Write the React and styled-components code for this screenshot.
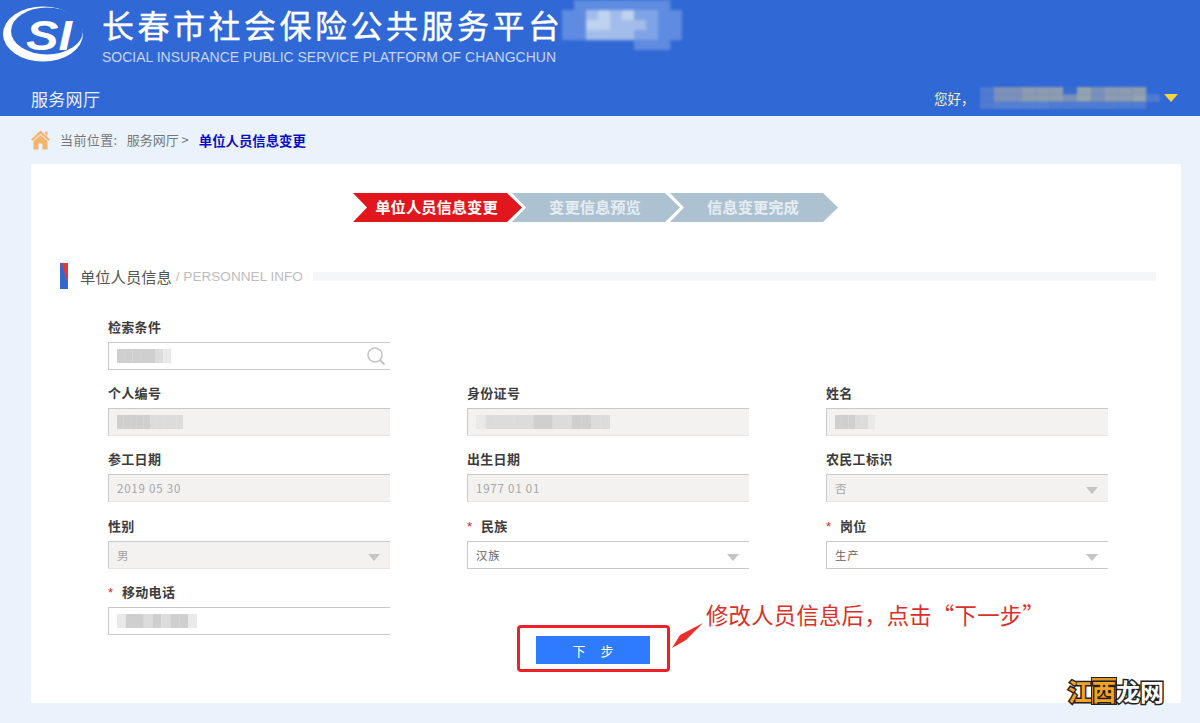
import React from "react";
import styled, { createGlobalStyle } from "styled-components";

const CJK = `"Noto Sans CJK SC", "Liberation Sans", sans-serif`;

const GlobalStyle = createGlobalStyle`
  html, body {
    margin: 0;
    padding: 0;
    background: #eaf3fb;
    font-family: ${CJK};
  }
  * {
    box-sizing: border-box;
  }
`;

// pixelated privacy smudges from the screenshot
const Mosaic = ({ width, height, cols, rows, cells }) => (
  <svg width={width} height={height} viewBox={`0 0 ${cols} ${rows}`} preserveAspectRatio="none" style={{ display: "block", flex: "none" }}>
    {cells.map((row, y) =>
      row.map((c, x) => (c ? <rect key={`${x}-${y}`} x={x} y={y} width={1.02} height={1.02} fill={c} /> : null))
    )}
  </svg>
);

const Logo = () => (
  <svg width="84" height="60" viewBox="0 0 84 60">
    <ellipse cx="42" cy="30" rx="40" ry="27.5" fill="#fff" />
    <ellipse cx="46" cy="27" rx="36" ry="23.5" fill="#3068d6" />
    <text x="25" y="46" fontFamily="Liberation Sans" fontStyle="italic" fontWeight="700" fontSize="42" fill="#fff" textLength="46" lengthAdjust="spacingAndGlyphs">
      SI
    </text>
  </svg>
);

const SearchIcon = () => (
  <svg width="20" height="20" viewBox="0 0 20 20" fill="none" stroke="#c4c4c4">
    <circle cx="9" cy="9" r="7" strokeWidth="1.6" />
    <path d="M14 14l4.5 4.5" strokeWidth="2" />
  </svg>
);

const HomeIcon = () => (
  <svg width="19" height="20" viewBox="0 0 19 20">
    <path d="M9.5 0.5 L19 9.5 L17.4 11 L9.5 3.8 L1.6 11 L0 9.5 Z" fill="#f6b36c" />
    <path d="M9.5 5 L16.5 11.2 V19.5 H11.5 V13.5 H7.5 V19.5 H2.5 V11.2 Z" fill="#f6b36c" />
    <path d="M14 1.5h2.4v4.6L14 4z" fill="#f6b36c" />
  </svg>
);

const h1 = "#5f8ce0";
const h2 = "#7ea3e6";
const h3 = "#a3bdeb";
const h4 = "#c0d2f1";
const headerCells = [
  [null, h1, h1, h1, h1, h1, h1, h1, h1, null],
  [h1, h1, h3, h4, h3, h4, h2, h2, h1, h1],
  [h1, h1, h4, h4, h3, h3, h3, h2, h1, h1],
  [h1, h1, h3, h3, h3, h3, h2, h2, h1, h1],
  [null, null, null, null, null, null, h1, h1, h1, null],
];

const m1 = "#4f7bd0";
const m2 = "#7d90b8";
const m3 = "#8d9cb0";
const m4 = "#93a3ad";
const userCells = [
  [m1, m2, m2, m3, m3, m3, "#3a6bcf", m4, m2, m3, m3, m3, null],
  [m1, m2, m2, m3, m3, m3, m2, m4, m2, m3, m3, m4, m1],
  [m1, "#5580d4", "#5580d4", "#5580d4", "#5580d4", "#4f7bd0", "#4f7bd0", "#4f7bd0", "#4f7bd0", "#4f7bd0", "#4f7bd0", "#4f7bd0", null],
];

const g1 = "#cfcfcf";
const g2 = "#dcdcdc";
const g3 = "#e9e9e9";

const Fields = [
  { label: "检索条件", kind: "search", smudge: [[g1, g1, g1, g1, g1, g2, g3]], sw: 54 },
  null,
  null,
  { label: "个人编号", kind: "locked", smudge: [[g1, g1, g1, g1, g1, g2, g2, g2, g2, g2]], sw: 66 },
  { label: "身份证号", kind: "locked", smudge: [[g3, g2, g2, g2, g2, g2, g1, g1, g2, g2, g1, g1, g2, g2]], sw: 134 },
  { label: "姓名", kind: "locked", smudge: [[g1, g1, g1, g2, g2, g3]], sw: 40 },
  { label: "参工日期", kind: "locked", value: "2019 05 30" },
  { label: "出生日期", kind: "locked", value: "1977 01 01" },
  { label: "农民工标识", kind: "lockedSelect", value: "否" },
  { label: "性别", kind: "lockedSelect", value: "男" },
  { label: "民族", kind: "select", value: "汉族", required: true },
  { label: "岗位", kind: "select", value: "生产", required: true },
  { label: "移动电话", kind: "input", required: true, smudge: [[g3, g1, g1, g2, g1, g2, g1, g1, g3]], sw: 80 },
];

const App = () => {
  return (
    <Page>
      <GlobalStyle />
      <Header>
        <Brand>
          <LogoBox>
            <Logo />
          </LogoBox>
          <BrandText>
            <Title>长春市社会保险公共服务平台</Title>
            <SubTitle>SOCIAL INSURANCE PUBLIC SERVICE PLATFORM OF CHANGCHUN</SubTitle>
          </BrandText>
          <BrandSmudge>
            <Mosaic width={120} height={50} cols={10} rows={5} cells={headerCells} />
          </BrandSmudge>
        </Brand>
        <NavBar>
          <NavTitle>服务网厅</NavTitle>
          <UserBox>
            <Greeting>您好，</Greeting>
            <UserSmudge>
              <Mosaic width={180} height={22} cols={13} rows={3} cells={userCells} />
            </UserSmudge>
            <UserCaret />
          </UserBox>
        </NavBar>
      </Header>

      <Crumbs>
        <HomeIcon />
        <CrumbLead>当前位置:</CrumbLead>
        <CrumbText>服务网厅 &gt;</CrumbText>
        <CrumbCurrent>单位人员信息变更</CrumbCurrent>
      </Crumbs>

      <Card>
        <Steps>
          <Step $active>单位人员信息变更</Step>
          <Step>变更信息预览</Step>
          <Step>信息变更完成</Step>
        </Steps>

        <SectionHead>
          <SectionBar />
          <SectionTitle>单位人员信息</SectionTitle>
          <SectionSub>/ PERSONNEL INFO</SectionSub>
          <SectionStripe />
        </SectionHead>

        <Form>
          {Fields.map((f, i) =>
            f ? (
              <Field key={i}>
                <Label>
                  {f.required && <Star>*</Star>}
                  {f.label}
                </Label>
                <Box $locked={f.kind.startsWith("locked")}>
                  {f.smudge && <Mosaic width={f.sw} height={14} cols={f.smudge[0].length} rows={1} cells={f.smudge} />}
                  {f.value && <Value $locked={f.kind.startsWith("locked")}>{f.value}</Value>}
                  {f.kind === "search" && (
                    <BoxIcon>
                      <SearchIcon />
                    </BoxIcon>
                  )}
                  {f.kind.endsWith("elect") && <SelectCaret />}
                </Box>
              </Field>
            ) : (
              <div key={i} />
            )
          )}
        </Form>

        <Footer>
          <NextButton>下 步</NextButton>
          <Highlight />
          <Arrow width="36" height="28" viewBox="0 0 36 28">
            <path d="M32 1 L15 18 L1 26 L9 13 Z" fill="#e8302c" />
          </Arrow>
          <Note>修改人员信息后，点击“下一步”</Note>
        </Footer>

        <Watermark>
          <WmPlain>江</WmPlain>
          <WmBlock>西</WmBlock>
          <WmWhite>龙网</WmWhite>
        </Watermark>
      </Card>
    </Page>
  );
};

export default App;

const Page = styled.div`
  width: 1200px;
  height: 723px;
  overflow: hidden;
  background: #eaf3fb;
`;

const Header = styled.header`
  height: 116px;
  background: #3068d6;
  display: flex;
  flex-direction: column;
`;

const Brand = styled.div`
  height: 80px;
  display: flex;
  align-items: flex-start;
`;

const LogoBox = styled.div`
  width: 102px;
  padding: 4px 0 0 1px;
`;

const BrandText = styled.div`
  width: 460px;
  padding-top: 4px;
`;

const Title = styled.h1`
  margin: 0;
  font-size: 32px;
  line-height: 40px;
  letter-spacing: 3.5px;
  font-weight: 400;
  -webkit-text-stroke: 0.4px #fff;
  color: #fff;
  white-space: nowrap;
`;

const SubTitle = styled.div`
  margin-top: 5px;
  font-family: "Liberation Sans", sans-serif;
  font-size: 14px;
  line-height: 16px;
  color: #c6d5f2;
  white-space: nowrap;
`;

const BrandSmudge = styled.div`
  filter: blur(1.5px);
`;

const NavBar = styled.div`
  height: 36px;
  display: flex;
  align-items: center;
  justify-content: space-between;
  padding: 0 22px 0 31px;
`;

const NavTitle = styled.div`
  font-size: 17px;
  color: #e8eefb;
  letter-spacing: 0.3px;
`;

const UserBox = styled.div`
  display: flex;
  align-items: center;
`;

const Greeting = styled.span`
  width: 46px;
  font-size: 13.5px;
  color: #f3efb6;
  white-space: nowrap;
`;

const UserSmudge = styled.div`
  filter: blur(1px);
`;

const UserCaret = styled.span`
  margin-left: 4px;
  width: 0;
  height: 0;
  border-left: 7px solid transparent;
  border-right: 7px solid transparent;
  border-top: 8px solid #f5d33d;
`;

const Crumbs = styled.nav`
  height: 48px;
  padding: 0 0 1px 31px;
  display: flex;
  align-items: center;
  gap: 9px;
`;

const CrumbText = styled.span`
  font-size: 13px;
  color: #777;
  white-space: nowrap;
`;

const CrumbLead = styled(CrumbText)`
  margin-left: 1px;
  letter-spacing: 0.4px;
`;

const CrumbCurrent = styled.span`
  margin-left: 1px;
  font-size: 13.4px;
  font-weight: 700;
  color: #0c0cc4;
  white-space: nowrap;
`;

const Card = styled.main`
  position: relative;
  margin-left: 31px;
  width: 1150px;
  height: 539px;
  background: #fff;
  padding: 29px 25px 0 29px;
`;

const Steps = styled.div`
  display: flex;
  padding-left: 293px;
`;

const Step = styled.div`
  width: ${(p) => (p.$active ? "169px" : "168px")};
  height: 29px;
  margin-right: -10px;
  display: flex;
  align-items: center;
  justify-content: center;
  padding: 0 2px 3px 0;
  font-size: 15.3px;
  font-weight: 700;
  color: ${(p) => (p.$active ? "#fff" : "#e6edf2")};
  background: ${(p) => (p.$active ? "#e2171d" : "#adc2d1")};
  clip-path: polygon(0 0, calc(100% - 15px) 0, 100% 50%, calc(100% - 15px) 100%, 0 100%, 14px 50%);
  white-space: nowrap;
`;

const SectionHead = styled.div`
  margin-top: 41px;
  height: 26px;
  display: flex;
  align-items: center;
`;

const SectionBar = styled.div`
  width: 8px;
  height: 26px;
  margin-right: 12px;
  background: linear-gradient(to bottom left, #dd3b3b 0 6px, transparent 6.5px), #3565d2;
`;

const SectionTitle = styled.span`
  font-size: 15.3px;
  color: #555;
  white-space: nowrap;
`;

const SectionSub = styled.span`
  margin: 1px 0 0 4px;
  font-family: "Liberation Sans", sans-serif;
  font-size: 13.6px;
  color: #bdbdbd;
  white-space: nowrap;
`;

const SectionStripe = styled.div`
  flex: 1;
  height: 9px;
  margin-left: 10px;
  background: #f4f6f8;
`;

const Form = styled.div`
  margin-top: 27px;
  margin-left: 48px;
  display: grid;
  grid-template-columns: repeat(3, 282px);
  grid-template-rows: 66px 66px 67px 66px 54px;
  column-gap: 77px;
`;

const Field = styled.div`
  display: flex;
  flex-direction: column;
`;

const Label = styled.label`
  height: 26px;
  line-height: 21px;
  font-size: 13px;
  font-weight: 700;
  letter-spacing: 0.3px;
  color: #3c3c3c;
  white-space: nowrap;
`;

const Star = styled.span`
  display: inline-block;
  width: 14px;
  color: #d9222a;
  font-family: "Liberation Sans", sans-serif;
  font-weight: 400;
`;

const Box = styled.div`
  position: relative;
  height: 28px;
  display: flex;
  align-items: center;
  padding-left: 8px;
  border: 1px solid #c9c9c9;
  border-right: none;
  border-bottom-color: ${(p) => (p.$locked ? "#e4e4e4" : "#c9c9c9")};
  background: ${(p) => (p.$locked ? "#f3f2f1" : "#fff")};
`;

const Value = styled.span`
  font-size: 11.5px;
  letter-spacing: 0.8px;
  color: ${(p) => (p.$locked ? "#a5a5a5" : "#666")};
`;

const BoxIcon = styled.span`
  position: absolute;
  right: 4px;
  top: 3px;
  display: flex;
`;

const SelectCaret = styled.span`
  position: absolute;
  right: 10px;
  top: 12px;
  width: 0;
  height: 0;
  border-left: 6px solid transparent;
  border-right: 6px solid transparent;
  border-top: 7px solid #c4c4c4;
`;

const Footer = styled.div`
  position: relative;
  margin-top: 1px;
  padding-left: 476px;
`;

const NextButton = styled.button`
  display: block;
  width: 114px;
  height: 28px;
  padding: 0;
  border: none;
  background: #2f7bff;
  color: #fff;
  font-family: ${CJK};
  font-size: 13px;
  word-spacing: 12px;
`;

const Highlight = styled.div`
  position: absolute;
  left: 457px;
  top: -11px;
  width: 153px;
  height: 47px;
  border: 3px solid #ec2027;
  border-radius: 4px;
`;

const Arrow = styled.svg`
  position: absolute;
  left: 611px;
  top: -14px;
`;

const Note = styled.div`
  position: absolute;
  left: 646px;
  top: -38px;
  font-size: 22.3px;
  letter-spacing: 0.3px;
  line-height: 32px;
  color: #d9302a;
  white-space: nowrap;
`;

const Watermark = styled.div`
  position: absolute;
  left: 1037px;
  top: 514px;
  display: flex;
  font-size: 24px;
  line-height: 26px;
  font-weight: 700;
  white-space: nowrap;
  paint-order: stroke fill;
  -webkit-text-stroke: 3px #222;
`;

const WmPlain = styled.span`
  color: #f3a327;
`;

const WmBlock = styled.span`
  color: #f3a327;
  background: #e8951f;
  outline: 1px solid #222;
`;

const WmWhite = styled.span`
  color: #fff;
`;
